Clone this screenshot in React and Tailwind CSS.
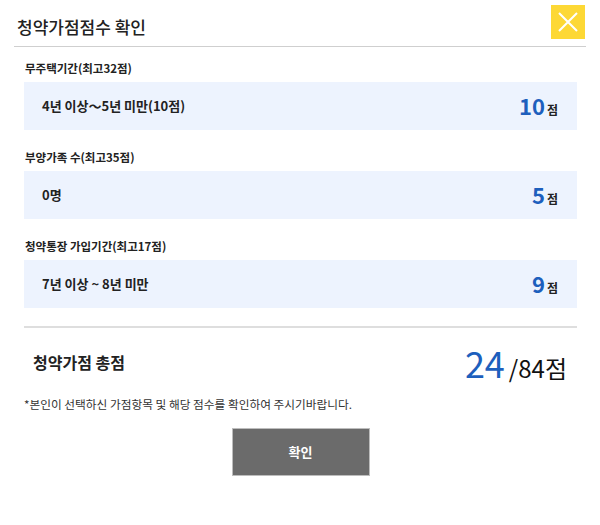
import React from 'react';

const items = [
  { label: '무주택기간(최고32점)', value: '4년 이상～5년 미만(10점)', score: 10 },
  { label: '부양가족 수(최고35점)', value: '0명', score: 5 },
  { label: '청약통장 가입기간(최고17점)', value: '7년 이상 ~ 8년 미만', score: 9 },
];

function App() {
  return (
    <div
      className="w-[600px] h-[525px] bg-white text-[#222]"
      style={{ fontFamily: '"Noto Sans CJK KR", "Noto Sans", sans-serif' }}
    >
      {/* header */}
      <div className="mx-[14px] h-[47px] border-b border-[#cfcfcf] flex items-start justify-between">
        <h1 className="mt-[16px] ml-[3px] text-[17px] leading-[22px] font-medium text-[#222]">청약가점점수 확인</h1>
        <button className="mt-[5px] mr-px w-[34px] h-[34px] bg-[#fdd835] flex items-center justify-center">
          <svg width="22" height="22" viewBox="0 0 22 22">
            <path d="M2 2 L20 20 M20 2 L2 20" stroke="#fff" strokeWidth="2" />
          </svg>
        </button>
      </div>

      <div className="px-[24px] pr-[23px]">
        {items.map((item, i) => (
          <div key={i} className={i === 0 ? 'pt-[13px]' : 'pt-[19px]'}>
            <p className="text-[11.5px] leading-[16px] font-bold text-[#222] ml-px">{item.label}</p>
            <div className="mt-[6px] h-[48px] bg-[#edf3fe] flex items-center justify-between pl-[18px] pr-[19px]">
              <span className="text-[13px] font-bold text-[#222]">{item.value}</span>
              <span className="flex items-baseline gap-[2px]">
                <span className="text-[22px] font-bold text-[#1d5fbd] leading-none">{item.score}</span>
                <span className="text-[12px] font-bold text-[#222]">점</span>
              </span>
            </div>
          </div>
        ))}

        <div className="mt-[18px] border-t-2 border-[#dedede]" />

        <div className="h-[67px] flex items-center justify-between pl-[9px] pr-[10px]">
          <span className="text-[16px] font-bold text-[#222]">청약가점 총점</span>
          <span className="flex items-baseline">
            <span className="text-[36px] leading-none text-[#1d5fbd] mr-[4px]">24</span>
            <span className="text-[24px] leading-none text-[#111]">/84점</span>
          </span>
        </div>

        <p className="mt-[1px] text-[11.7px] leading-[16px] text-[#333]">*본인이 선택하신 가점항목 및 해당 점수를 확인하여 주시기바랍니다.</p>

        <div className="mt-[16px] flex justify-center">
          <button className="w-[138px] h-[48px] bg-[#6b6b6b] border border-[#bdbdbd] text-white text-[13px] font-bold">확인</button>
        </div>
      </div>
    </div>
  );
}

export default App;
